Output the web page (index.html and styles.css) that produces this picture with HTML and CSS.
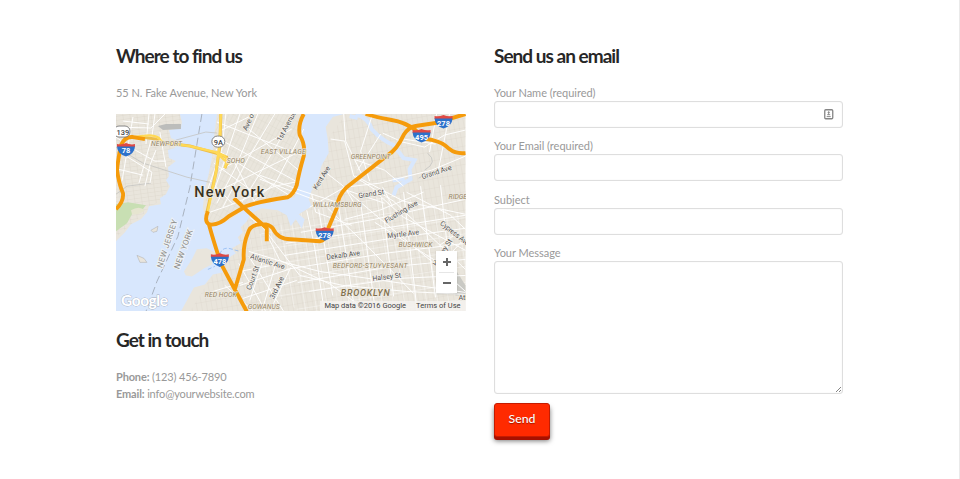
FILE: index.html
```html
<!DOCTYPE html>
<html lang="en">
<head>
<meta charset="utf-8">
<title>Contact</title>
<link rel="stylesheet" href="styles.css">
</head>
<body>
<main class="page">
  <section class="column">
    <h2 class="heading">Where to find us</h2>
    <p class="address">55 N. Fake Avenue, New York</p>
    <div class="map">
      <svg class="map-canvas" viewBox="116 115 350 196.5" preserveAspectRatio="none">
        <defs>
          <pattern id="gridA" width="7" height="4" patternUnits="userSpaceOnUse" patternTransform="rotate(-8)"><path d="M0 0H7M0 0V4" stroke="#dad4c8" stroke-width=".6" fill="none"/></pattern>
          <pattern id="gridB" width="4" height="8" patternUnits="userSpaceOnUse" patternTransform="rotate(28)"><path d="M0 0H4M0 0V8" stroke="#dad4c8" stroke-width=".6" fill="none"/></pattern>
          <pattern id="gridC" width="5" height="9" patternUnits="userSpaceOnUse" patternTransform="rotate(-10)"><path d="M0 0H5M0 0V9" stroke="#dad4c8" stroke-width=".55" fill="none"/></pattern>
          <pattern id="gridD" width="11" height="16" patternUnits="userSpaceOnUse" patternTransform="rotate(-9)"><path d="M0 0H11M0 0V16" stroke="#fff" stroke-width=".7" fill="none"/></pattern>
          <g id="shield">
            <path d="M-9-5Q-4.500-4 0-6Q4.500-4 9-5V-2H-9Z" fill="#df4a45"/>
            <path d="M-9-2.500H9Q8.500 5 0 7.500Q-8.500 5-9-2.500Z" fill="#2d71ca"/>
          </g>
        </defs>
        <rect x="116" y="115" width="350" height="197" fill="#e9e5dc"/>
        <path d="M116 115H182L172 160L167 195L116 238Z" fill="url(#gridA)"/>
        <path d="M218 115H305L302 195L245 210L210 225L204 190Z" fill="url(#gridB)"/>
        <path d="M346 115H466V312H190L250 215L310 210L328 140Z" fill="url(#gridC)"/>
        <path d="M305 212L390 195L466 215V312H300L260 285L250 240Z" fill="url(#gridD)"/>

        <path class="water" d="M180 115L182 123L181 129L169 131L171 139L178 142L175 149L168 151L169 159L176 162L168 168L169 177L166 181L170 187L166 195L160 199L161 205L149 207L147 213L141 220L131 225L125 233L116 242V312H181L194 288L205 285L213 275L223 273L225 264L231 257L236 254L232 249L241 244L238 238L243 233L241 228L247 222L251 214L262 209L278 211L287 216L291 227L296 220L302 229L305 220L299 215L312 207L309 200L312 191L318 181L322 166L329 154L328 140L326 128L333 118L344 115H304L300 126L304 141L305 151L301 164L299 184L295 198L281 201L257 204L242 212L230 221L212 227L206 222L203 208L205 190L209 174L212 159L214 140L217 115Z"/>
        <path d="M116 205L128 203L146 206L141 212L132 215L127 224L116 232Z" fill="#c8dfb3"/>
        <path d="M131 211Q139 206 145 211Q139 216 132 215Z" fill="#e6e5d0"/>
        <path d="M184 272L192 260L197 250L207 249L217 254L212 265L204 269L192 277L186 276Z" fill="#e9e5dc"/>
        <path d="M151 231L158 227L157 232L153 233ZM137 256L144 259L147 263L140 263Z" fill="#e9e5dc" stroke="#aaa" stroke-width=".5"/>
        <path d="M158 127L166 125H181V130L163 131Z" fill="#bcbdbb"/>
        <path d="M356 115Q369 119 372 130Q382 141 394 146L404 159L415 161L410 170L411 180L397 188L394 196M405 180L393 181M350 117L358 119" fill="none" stroke="#d8e7fd" stroke-width="4"/>
        <path d="M456 270L466 286V296H456Z" fill="#c9c9c4"/>

        <g class="dash">
          <path d="M202 115L190 188L178 237L157 282L146 312"/>
        </g>
        <path class="ferry" d="M220 255Q222 248 229 249L240 252M208 270L215 267"/>
        <path class="rail" d="M116 148L143 164L187 178L214 184M176 141L206 133L217 134M116 195L127 187L151 184M428 154Q439 163 425 171M432 172L419 179"/>

        <g class="streets">
          <path d="M116 138L130 148L155 162L166 162M133 118L128 147L122 182M155 115L152 138L139 184M116 128L151 129L165 115M149 115L146 145M160 133L166 168M123 155L152 173L150 184M118 170L143 176M123 122L149 125M156 151L150 166L145 187"/>
          <path d="M226 115L222 150L208 190M240 115L226 158L210 204M258 115L235 170L217 204M275 115L249 158L223 208M293 119L261 173L242 203M304 130L276 183L254 202M217 123L304 157M216 138L298 183M216 150L291 197M214 164L261 198M210 181L233 205M220 132L255 115M219 172L292 130M222 190L297 154M232 158L255 203M249 130L300 172M210 213L230 206L275 187L300 182"/>
          <path d="M260 176L300 191L337 203M260 180L300 195L335 208M310 208L345 188L380 184L432 171L466 157M331 140L345 142L354 177L394 202L466 270M344 115L346 142L363 177M327 174L345 188L357 208M373 115L361 152L370 182M381 135L358 171M437 115L430 153M450 115L439 170M383 134L403 143L425 148L445 136L466 131M404 140L436 145M344 190L385 204M354 160L385 171L404 187M383 188L393 207M312 195L316 213L352 226"/>
          <path d="M250 218L264 229L300 276L343 286L407 292L466 295M264 229L280 261L331 285L368 312M249 252L285 263L320 272L466 293M307 211L315 248L324 308M319 210L333 296M339 208L354 304M361 203L375 306M382 199L394 297M404 193L417 306M421 187L436 298M441 186L453 294M286 244L410 225L466 216M285 256L392 239L466 229M286 270L385 254L466 244M298 283L387 268L466 260M309 292L398 279L466 276M301 233L375 220L466 200M345 220L380 211L424 193M328 209L363 242L414 294M343 188L381 220L437 266L466 292M373 190L404 218L466 251M356 177L404 202L466 215M407 193L451 216L466 230M440 246L459 233M446 260L465 239M375 223L445 267M239 264L266 312M249 257L284 312M264 258L250 301M277 261L262 312M291 268L270 312M240 286L289 270M243 299L297 281M240 272L277 265M225 286L253 311M210 293L243 283"/>
        </g>

        <path class="yellow-case" d="M141 138L156 140Q161 144 166 144L190 147L216 154L227 158Q229 162 225 169M221 115L220 147L216 174L207 213"/>
        <path class="yellow" d="M126 139L143 137Q153 135 159 139Q162 144 168 144L190 147L216 153L225 157Q228 160 225 169M216 153L229 165M221 115L220 137L219 151L216 174L208 212"/>
        <path class="highway" d="M145 140L133 138Q125 137 121 146Q118 160 117 171Q119 185 123 194Q124 202 116 210"/>
        <path class="highway" d="M304 115Q298 126 300 136Q306 146 304 157Q299 174 297 186Q294 195 288 198Q260 202 246 207L229 217Q218 227 209 225Q204 222 208 212M209 225Q216 250 222 266L235 290L247 312M234 199L249 213L267 229L267 242M235 290L244 260Q243 246 248 234Q250 226 260 225Q269 224 273 229Q278 240 291 240L320 242Q326 241 326 235L337 209Q338 197 347 188L388 156Q397 151 404 136Q409 128 416 127L436 124L466 115M366 115Q379 119 392 121Q405 123 416 131Q422 140 433 141Q443 143 450 150Q456 155 466 154"/>

        <g class="area">
          <text x="151" y="147" textLength="31">NEWPORT</text><text x="227" y="164" textLength="18">SOHO</text>
          <text x="261" y="155" textLength="45">EAST VILLAGE</text><text x="351" y="160" textLength="40">GREENPOINT</text>
          <text x="313" y="208" textLength="49">WILLIAMSBURG</text><text x="449" y="200">RIDGE</text>
          <text x="399" y="248" textLength="34">BUSHWICK</text><text x="333" y="269" textLength="75">BEDFORD-STUYVESANT</text>
          <text x="205" y="298" textLength="32">RED HOOK</text><text x="248" y="310" textLength="32">GOWANUS</text>
          <text class="borough" x="341" y="296.500" textLength="49">BROOKLYN</text>
        </g>
        <g class="street-name">
          <text transform="translate(247 132) rotate(-65)">Ave of</text><text transform="translate(281 143) rotate(-62)" textLength="33">1st Avenue</text>
          <text transform="translate(317 191) rotate(-58)" textLength="26">Kent Ave</text><text transform="translate(359 199) rotate(-9)" textLength="26">Grand St</text>
          <text transform="translate(423 180) rotate(-18)" textLength="31">Grand Ave</text><text transform="translate(387 224) rotate(-31)" textLength="37">Flushing Ave</text>
          <text transform="translate(388 239) rotate(-7)" textLength="32">Myrtle Ave</text><text transform="translate(440 225) rotate(38)" textLength="35">Cypress Ave</text>
          <text transform="translate(327 260.500) rotate(-8)" textLength="34">Dekalb Ave</text><text transform="translate(373 281.500) rotate(-7)" textLength="29">Halsey St</text>
          <text transform="translate(250 259) rotate(18)" textLength="36">Atlantic Ave</text><text transform="translate(251 291) rotate(-70)" textLength="25">Court St</text>
          <text transform="translate(274 300) rotate(-64)" textLength="24">3rd Ave</text><text transform="translate(437 267) rotate(-58)">Halsey St</text>
          <text x="459" y="301">Atl</text>
        </g>
        <g class="state"><text transform="translate(162 269) rotate(-72)" textLength="50">NEW JERSEY</text><text transform="translate(179 270) rotate(-70)" textLength="41">NEW YORK</text></g>
        <text class="city" x="194.500" y="197.500" textLength="70">New York</text>
        <g class="shield-text">
          <use href="#shield" x="126" y="150"/><text x="126" y="153.500">78</text>
          <use href="#shield" x="444" y="122"/><text x="444" y="126.500">278</text>
          <use href="#shield" x="422" y="136"/><text x="422" y="140.500">495</text>
          <use href="#shield" x="325" y="234"/><text x="325" y="238.500">278</text>
          <use href="#shield" x="220" y="260"/><text x="220" y="264.500">478</text>
        </g>
        <g class="route"><rect x="114" y="127" width="16" height="11" rx="5"/><text x="123" y="135.500">139</text><rect x="212" y="137" width="13" height="11" rx="5.500"/><text x="218.500" y="145.500">9A</text></g>
        <text class="google" x="121" y="307" textLength="47">Google</text>
      </svg>
      <div class="zoom-control"><span class="zoom-sign plus"></span><span class="zoom-sign"></span></div>
      <div class="map-credit"><span>Map data ©2016 Google</span><span>Terms of Use</span></div>
    </div>
    <h2 class="heading touch">Get in touch</h2>
    <p class="contact"><b>Phone:</b> (123) 456-7890<br><b>Email:</b> info@yourwebsite.com</p>
  </section>

  <section class="column">
    <h2 class="heading">Send us an email</h2>
    <form class="form">
      <label class="field">Your Name (required)
        <span class="control">
          <svg class="contact-icon" viewBox="0 0 10 11"><rect x=".75" y=".75" width="8" height="9" rx="1" fill="#fff" stroke="#858585" stroke-width="1.300"/><path d="M4.700 2.200V5.800M3.700 3.500H5.700M3.200 5.700H6.200M2.700 7.600H6.700" stroke="#8b8b8b" stroke-width="1"/></svg>
        </span>
      </label>
      <label class="field">Your Email (required)<span class="control"></span></label>
      <label class="field">Subject<span class="control"></span></label>
      <label class="field">Your Message
        <span class="control message"><svg class="grip" viewBox="0 0 7 7"><path d="M1 6L6 1M4 6L6 4" stroke="#777" stroke-width=".9"/></svg></span>
      </label>
      <button class="send" type="button">Send</button>
    </form>
  </section>
</main>
</body>
</html>
```
FILE: styles.css
```css
* { box-sizing: border-box; }
body { margin: 0; background: #fff; color: #999; font: 11px/17.5px Lato, "Liberation Sans", sans-serif; letter-spacing: -.03px; }
.page { height: 479px; padding: 43.5px 116px 0; border-right: 1px solid #eaeaea; display: grid; grid-template-columns: 349.5px 349px; column-gap: 28.5px; align-items: start; overflow: hidden; }
.heading { margin: 0; color: #272727; font-size: 19px; line-height: 24px; font-weight: 700; letter-spacing: -.98px; white-space: nowrap; }
.address { margin: 16px 0 13px; height: 17.5px; }
.map { position: relative; height: 197px; overflow: hidden; letter-spacing: 0; }
.map-canvas { display: block; width: 100%; height: 100%; font-family: Roboto, sans-serif; }
.touch { margin-top: 16.5px; }
.contact { margin: 16px 0 0; letter-spacing: -.15px; }

.water { fill: #d8e7fd; }
.dash path { fill: none; stroke: #a3abb8; stroke-width: .9; stroke-dasharray: 8 4; }
.ferry { fill: none; stroke: #8eb9f2; stroke-width: .8; stroke-dasharray: 4 2; }
.rail { fill: none; stroke: #c4c4c2; stroke-width: .8; }
.streets path { fill: none; stroke: #fff; stroke-width: .95; }
.yellow-case { fill: none; stroke: #edbd49; stroke-width: 3; }
.yellow { fill: none; stroke: #ffd956; stroke-width: 2.4; }
.highway { fill: none; stroke: #f59b0b; stroke-width: 3.9; stroke-linejoin: round; }
.area text { fill: #958463; font-size: 6.9px; font-style: italic; font-weight: 400; stroke: #eeeae2; stroke-width: 1.2px; paint-order: stroke; }
.area .borough { font-size: 9px; font-weight: 500; fill: #81704d; }
.street-name text { font-size: 7.2px; fill: #555; stroke: #f2efe9; stroke-width: 1.4px; paint-order: stroke; }
.state text { font-size: 8px; fill: #8b8b89; stroke: #edf1f4; stroke-width: 2px; paint-order: stroke; }
.city { font-size: 14.5px; font-weight: 500; fill: #38321f; stroke: #f1eee5; stroke-width: 1.5px; paint-order: stroke; }
.shield-text text { font-size: 7.5px; font-weight: 700; fill: #fff; text-anchor: middle; }
.route rect { fill: #fff; stroke: #777; stroke-width: .9; }
.route text { font-size: 7.5px; font-weight: 500; fill: #444; text-anchor: middle; }
.google { font: 15.5px Lato, sans-serif; font-weight: 700; fill: #fff; stroke: #a9b1bd; stroke-width: .8px; paint-order: stroke; }
.zoom-control { position: absolute; right: 8.5px; bottom: 18px; width: 21px; height: 42px; background: #fff; display: grid; grid-template-rows: 1fr 1fr; box-shadow: 0 1px 2px #0002; }
.zoom-sign { display: grid; place-items: center; }
.zoom-sign + .zoom-sign { border-top: 1px solid #e6e6e6; margin: 0 3px; }
.zoom-sign::before, .plus::after { content: ""; grid-area: 1 / 1; width: 8px; height: 2px; background: #666; }
.plus::after { width: 2px; height: 8px; }
.map-credit { position: absolute; right: 0; bottom: 0; height: 10px; padding: 0 5px 0 4px; background: #f5f3f0cc; display: flex; gap: 10px; font: 7.5px/10px Roboto, sans-serif; color: #444; white-space: nowrap; }

.form { margin-top: 16px; display: grid; justify-items: stretch; }
.field { display: block; margin-bottom: 9.5px; line-height: 17px; }
.control { display: flex; align-items: center; justify-content: flex-end; height: 27px; padding-right: 8px; border: 1px solid #dedede; border-radius: 3px; background: #fff; box-shadow: inset 0 0 1px #ddd; }
.contact-icon { width: 10px; height: 11px; }
.message { height: 132.5px; align-items: flex-end; padding: 0; }
.grip { width: 7px; height: 7px; }
.send { justify-self: start; width: 56px; height: 34px; padding: 0 0 3px; border: 1px solid #c51b00; border-radius: 3px; background: #ff2a00; color: #fff; font: 12.3px/17px Lato, sans-serif; font-weight: 500; text-shadow: 0 1px 1px #0006; box-shadow: 0 3px 0 #a71000, 0 4px 5px #0008; }
```
